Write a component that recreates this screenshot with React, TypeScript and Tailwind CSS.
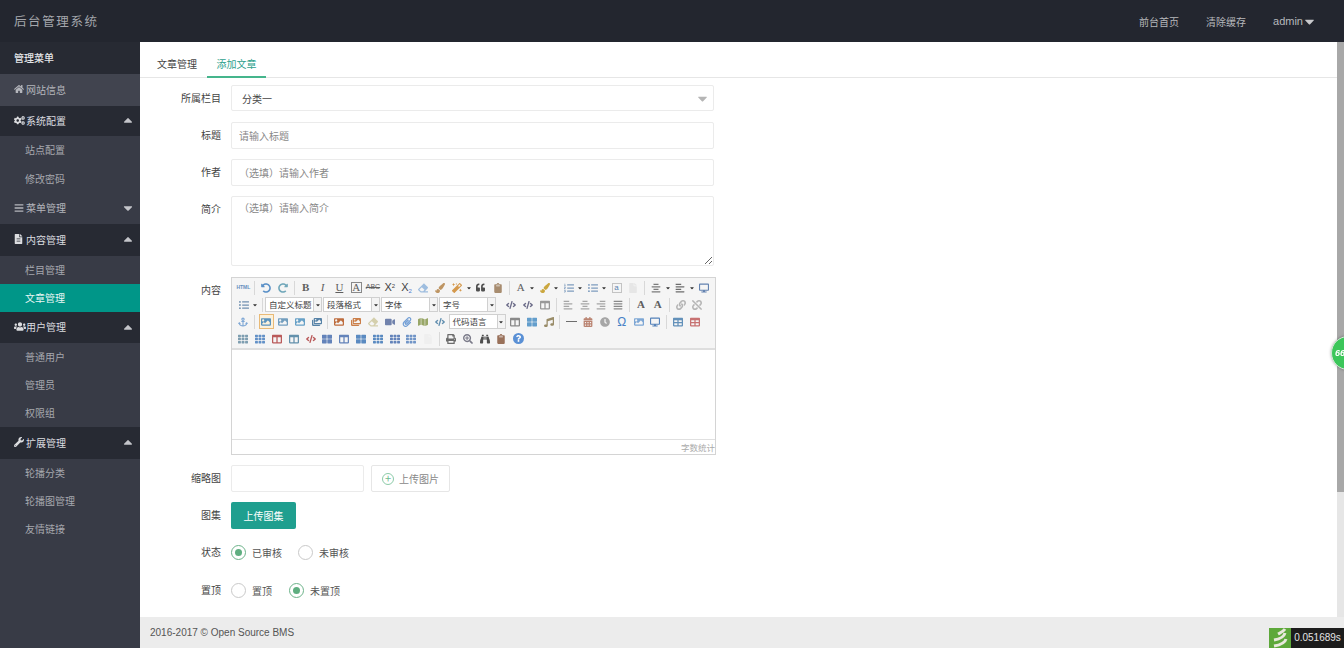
import React from 'react';
import { FaHome, FaCogs, FaBars, FaFileAlt, FaUsers, FaWrench, FaCaretUp, FaCaretDown, FaAnchor, FaQuestion, FaBinoculars, FaPrint, FaPaperclip, FaLink, FaUnlink, FaQuoteLeft, FaPaintBrush, FaEraser, FaMagic, FaUndoAlt, FaRedoAlt, FaListOl, FaListUl, FaAlignLeft, FaAlignCenter, FaAlignRight, FaAlignJustify, FaClock, FaCalendarAlt, FaImage, FaImages, FaTable, FaDesktop, FaClipboard, FaSearchPlus, FaFile, FaVideo, FaMusic, FaMap, FaColumns, FaThLarge, FaTh, FaCode } from 'react-icons/fa';

const FONT = '"Noto Sans CJK SC", "Liberation Sans", sans-serif';

type MenuRow = { label: string; kind: 'title' | 'head' | 'plain' | 'sub' | 'active' | 'info'; h: number; icon?: React.ReactNode; caret?: 'up' | 'down' };

const menu: MenuRow[] = [
    { label: '管理菜单', kind: 'title', h: 32 },
    { label: '网站信息', kind: 'info', h: 32, icon: <FaHome className="w-[10px] h-[10px]" /> },
    { label: '系统配置', kind: 'head', h: 30, icon: <FaCogs className="w-[11px] h-[11px]" />, caret: 'up' },
    { label: '站点配置', kind: 'sub', h: 29 },
    { label: '修改密码', kind: 'sub', h: 28 },
    { label: '菜单管理', kind: 'plain', h: 31, icon: <FaBars className="w-[10px] h-[10px]" />, caret: 'down' },
    { label: '内容管理', kind: 'head', h: 32, icon: <FaFileAlt className="w-[9px] h-[10px]" />, caret: 'up' },
    { label: '栏目管理', kind: 'sub', h: 28 },
    { label: '文章管理', kind: 'active', h: 28 },
    { label: '用户管理', kind: 'head', h: 31, icon: <FaUsers className="w-[12px] h-[11px]" />, caret: 'up' },
    { label: '普通用户', kind: 'sub', h: 28 },
    { label: '管理员', kind: 'sub', h: 28 },
    { label: '权限组', kind: 'sub', h: 28 },
    { label: '扩展管理', kind: 'head', h: 32, icon: <FaWrench className="w-[10px] h-[10px]" />, caret: 'up' },
    { label: '轮播分类', kind: 'sub', h: 28 },
    { label: '轮播图管理', kind: 'sub', h: 28 },
    { label: '友情链接', kind: 'sub', h: 28 },
];

const SideItem: React.FC<{ row: MenuRow }> = ({ row }) => {
    const styles: Record<MenuRow['kind'], string> = {
        title: 'bg-[#272a33] text-[#e4e5e8] font-medium pl-[14px]',
        head: 'bg-[#272a33] text-[#dcdde0] pl-[14px]',
        info: 'bg-[#41444f] text-[#b4b6bc] pl-[14px]',
        plain: 'text-[#b4b6bc] pl-[14px]',
        sub: 'text-[#a6a8ae] pl-[25px]',
        active: 'bg-[#009688] text-[#e8f6f4] pl-[25px]',
    };
    return (
        <div className={`flex items-center pr-[5px] pb-[2px] text-[10px] ${styles[row.kind]}`} style={{ height: row.h }}>
            {row.icon && <span className="w-[12px] flex shrink-0 items-center">{row.icon}</span>}
            <span className="flex-1">{row.label}</span>
            {row.caret === 'up' && <FaCaretUp className="w-[14px] h-[14px] text-[#c4c5ca]" />}
            {row.caret === 'down' && <FaCaretDown className="w-[14px] h-[14px] text-[#c4c5ca]" />}
        </div>
    );
};

const FormRow: React.FC<{ label: string; top: string; children: React.ReactNode; center?: boolean }> = ({ label, top, children, center }) => (
    <div className={`flex ${top} ${center ? 'items-center' : ''}`}>
        <label className="w-[81px] shrink-0 text-right text-[10px] leading-[26px] text-[#444]">{label}</label>
        <div className="ml-[10px]">{children}</div>
    </div>
);

const Radio: React.FC<{ label: string; checked?: boolean }> = ({ label, checked }) => (
    <span className="flex items-center gap-[6px] text-[10px] text-[#555]">
        <span className={`w-[15px] h-[15px] rounded-full border flex items-center justify-center ${checked ? 'border-[#6db38a]' : 'border-[#c9c9c9]'}`}>
            {checked && <span className="w-[7px] h-[7px] rounded-full bg-[#5fae80]" />}
        </span>
        {label}
    </span>
);

// toolbar pieces
type Tool = { t: 'i'; n: React.ReactNode; caret?: boolean; on?: boolean } | { t: 's' } | { t: 'gap'; w: number } | { t: 'sel'; label: string; w: number };

const ic = (n: React.ReactNode, caret?: boolean, on?: boolean): Tool => ({ t: 'i', n, caret, on });
const sep: Tool = { t: 's' };
const sel = (label: string, w = 57): Tool => ({ t: 'sel', label, w });
const cls = 'w-[10px] h-[10px]';
const letter = (s: string, extra = '') => <span className={`font-['Liberation_Serif'] text-[11px] leading-none text-[#444] ${extra}`}>{s}</span>;

const row1: Tool[] = [
    ic(<span className="text-[5px] font-bold text-[#4a7fb5] font-['Liberation_Sans']">HTML</span>), sep,
    ic(<FaUndoAlt className={`${cls} text-[#3f7fc0]`} />), ic(<FaRedoAlt className={`${cls} text-[#5a9ab0]`} />), sep,
    ic(letter('B', 'font-bold')), ic(letter('I', 'italic')), ic(letter('U', 'underline')),
    ic(<span className="w-[11px] h-[11px] border border-[#777] flex items-center justify-center">{letter('A', 'text-[9px]')}</span>),
    ic(<span className="text-[7px] line-through text-[#444] font-['Liberation_Sans']">ABC</span>),
    ic(<span className="text-[11px] leading-none font-['Liberation_Sans'] text-[#222]">X<sup className="text-[6px]">2</sup></span>),
    ic(<span className="text-[11px] leading-none font-['Liberation_Sans'] text-[#222]">X<sub className="text-[6px] text-[#36c]">2</sub></span>),
    ic(<FaEraser className={`${cls} text-[#8fb4dc]`} />), ic(<FaPaintBrush className={`${cls} text-[#b5854a]`} />),
    ic(<FaMagic className={`${cls} text-[#d08a30]`} />, true),
    ic(<FaQuoteLeft className="w-[9px] h-[9px] text-[#333]" />), ic(<FaClipboard className={`${cls} text-[#9a7a58]`} />), sep,
    ic(letter('A'), true), ic(<FaPaintBrush className={`${cls} text-[#c49a20]`} />, true),
    ic(<FaListOl className={`${cls} text-[#6a8db5]`} />, true), ic(<FaListUl className={`${cls} text-[#6a8db5]`} />, true),
    ic(<span className="w-[10px] h-[10px] border border-[#bbb] text-[8px] leading-[8px] text-center text-[#3a6ea5] font-['Liberation_Sans']">a</span>),
    ic(<FaFile className={`${cls} text-[#e4e4e4]`} />), sep,
    ic(<FaAlignCenter className={`${cls} text-[#666]`} />, true), ic(<FaAlignLeft className={`${cls} text-[#555]`} />, true),
    ic(<FaDesktop className={`${cls} text-[#4a6fa5]`} />),
];

const row2: Tool[] = [
    ic(<FaListUl className={`${cls} text-[#5a7fa5]`} />, true), sep,
    sel('自定义标题'), sel('段落格式'), sel('字体'), sel('字号'), { t: 'gap', w: 6 },
    ic(<FaCode className={`${cls} text-[#557]`} />), ic(<FaCode className={`${cls} text-[#557]`} />), ic(<FaColumns className={`${cls} text-[#888]`} />), sep,
    ic(<FaAlignLeft className={`${cls} text-[#999]`} />), ic(<FaAlignCenter className={`${cls} text-[#999]`} />), ic(<FaAlignRight className={`${cls} text-[#999]`} />), ic(<FaAlignJustify className={`${cls} text-[#777]`} />), sep,
    ic(letter('A', 'font-bold')), ic(letter('A', 'font-bold')), sep,
    ic(<FaLink className={`${cls} text-[#aaa]`} />), ic(<FaUnlink className={`${cls} text-[#aaa]`} />),
];

const row3: Tool[] = [
    ic(<FaAnchor className={`${cls} text-[#6a9ad0]`} />), sep,
    ic(<FaImage className={`${cls} text-[#3f83b5]`} />, false, true), ic(<FaImage className={`${cls} text-[#5c8fb5]`} />), ic(<FaImage className={`${cls} text-[#4f93c0]`} />), ic(<FaImages className={`${cls} text-[#3b6f9a]`} />), sep,
    ic(<FaImage className={`${cls} text-[#b5561f]`} />), ic(<FaImages className={`${cls} text-[#c46a2a]`} />), ic(<FaEraser className={`${cls} text-[#cfc9a0]`} />), ic(<FaVideo className={`${cls} text-[#5a6fa0]`} />), ic(<FaPaperclip className={`${cls} text-[#5a8fd0]`} />), ic(<FaMap className={`${cls} text-[#8a9a50]`} />),
    ic(<FaCode className={`${cls} text-[#4a7fa5]`} />), sel('代码语言'),
    ic(<FaColumns className={`${cls} text-[#777]`} />), ic(<FaThLarge className={`${cls} text-[#4a8fc5]`} />), ic(<FaMusic className={`${cls} text-[#8a7a50]`} />), sep,
    ic(<span className="block w-[11px] h-[1px] bg-[#555]" />), ic(<FaCalendarAlt className={`${cls} text-[#b0705a]`} />), ic(<FaClock className={`${cls} text-[#999]`} />),
    ic(<span className="text-[12px] leading-none text-[#2a6fc0] font-['Liberation_Sans']">Ω</span>),
    ic(<FaImage className={`${cls} text-[#6a9ad0]`} />), ic(<FaDesktop className={`${cls} text-[#3a6fb0]`} />), sep,
    ic(<FaTable className={`${cls} text-[#4a80b0]`} />), ic(<FaTable className={`${cls} text-[#c05a5a]`} />),
];

const row4: Tool[] = [
    ic(<FaTh className={`${cls} text-[#6a8fa5]`} />), ic(<FaTh className={`${cls} text-[#4a80c0]`} />), ic(<FaColumns className={`${cls} text-[#b04040]`} />), ic(<FaColumns className={`${cls} text-[#4a80a0]`} />), ic(<FaCode className={`${cls} text-[#b04040]`} />),
    ic(<FaThLarge className={`${cls} text-[#4a70b0]`} />), ic(<FaColumns className={`${cls} text-[#4a70b0]`} />), ic(<FaThLarge className={`${cls} text-[#3f78b8]`} />), ic(<FaTh className={`${cls} text-[#3f78b8]`} />), ic(<FaTh className={`${cls} text-[#4a70b0]`} />), ic(<FaTh className={`${cls} text-[#5a85c0]`} />),
    ic(<FaFile className={`${cls} text-[#eeeeee]`} />), sep,
    ic(<FaPrint className={`${cls} text-[#555]`} />), ic(<FaSearchPlus className={`${cls} text-[#667]`} />), ic(<FaBinoculars className={`${cls} text-[#333]`} />), ic(<FaClipboard className={`${cls} text-[#8a5a40]`} />),
    ic(<span className="w-[11px] h-[11px] rounded-full bg-[#3f7fd0] flex items-center justify-center"><FaQuestion className="w-[7px] h-[7px] text-white" /></span>),
];

const ToolRow: React.FC<{ tools: Tool[] }> = ({ tools }) => (
    <div className="flex items-center h-[17px]">
        {tools.map((tool, i) => {
            if (tool.t === 's') return <span key={i} className="w-[1px] h-[14px] mx-[2.5px] bg-[#d8d8d8] shrink-0" />;
            if (tool.t === 'gap') return <span key={i} className="shrink-0" style={{ width: tool.w }} />;
            if (tool.t === 'sel') {
                return (
                    <span key={i} className="flex items-center h-[15px] shrink-0 mr-[1px] border border-[#d0d0d0] bg-white text-[8.5px] text-[#444]" style={{ width: tool.w }}>
                        <span className="flex-1 pl-[3px] whitespace-nowrap overflow-hidden">{tool.label}</span>
                        <span className="w-[8px] h-full border-l border-[#d0d0d0] bg-[#f4f4f4] flex items-center justify-center"><FaCaretDown className="w-[6px] h-[6px] text-[#333]" /></span>
                    </span>
                );
            }
            return (
                <span key={i} className={`flex items-center justify-center shrink-0 h-[15px] ${tool.caret ? 'w-[24px]' : 'w-[16.8px]'}`}>
                    <span className={`flex items-center justify-center w-[15px] h-[15px] opacity-85 ${tool.on ? 'border border-[#e8b060] bg-[#fdf1d8]' : ''}`}>{tool.n}</span>
                    {tool.caret && <FaCaretDown className="w-[6px] h-[6px] text-[#333] ml-[1px]" />}
                </span>
            );
        })}
    </div>
);

const inputClass = 'block w-[483px] h-[27px] border border-[#ebebeb] rounded-[2px] px-[7px] text-[10px] text-[#444] placeholder:text-[#888] outline-none bg-white';

export default function App() {
    return (
        <div className="w-[1344px] h-[648px] overflow-hidden flex flex-col bg-white" style={{ fontFamily: FONT }}>
            <header className="h-[42px] shrink-0 bg-[#23262f] flex items-center pl-[14px] pr-[27px]">
                <span className="text-[12.5px] tracking-[1.6px] text-[#a4a6ac]">后台管理系统</span>
                <nav className="ml-auto flex items-center text-[10px] text-[#b6b8bc]">
                    <span>前台首页</span>
                    <span className="ml-[27px]">清除缓存</span>
                    <span className="ml-[27px] flex items-center font-['Liberation_Sans'] text-[11px]">admin<FaCaretDown className="w-[15px] h-[15px] -ml-[1px] text-[#c8c9cc]" /></span>
                </nav>
            </header>
            <div className="flex flex-1 min-h-0">
                <aside className="w-[140px] shrink-0 bg-[#383b46]">
                    {menu.map(row => <SideItem key={row.label} row={row} />)}
                </aside>
                <div className="flex-1 flex flex-col min-w-0">
                    <div className="flex-1 flex min-h-0">
                        <main className="flex-1 min-w-0 flex flex-col">
                            <div className="h-[36px] shrink-0 border-b border-[#e6e6e6] flex text-[10px] text-[#444] pl-[7px]">
                                <span className="w-[60px] text-center leading-[43px]">文章管理</span>
                                <span className="w-[59px] h-[36px] text-center leading-[43px] text-[#2e9f8d] border-b-2 border-[#45b58c]">添加文章</span>
                            </div>
                            <form className="flex flex-col">
                                <FormRow label="所属栏目" top="mt-[7px]">
                                    <div className={`${inputClass} !h-[26px] flex items-center !px-[10px]`}>
                                        <span className="flex-1">分类一</span>
                                        <FaCaretDown className="w-[15px] h-[15px] text-[#b5b5b5] -mr-[7px]" />
                                    </div>
                                </FormRow>
                                <FormRow label="标题" top="mt-[11px]"><input className={inputClass} placeholder="请输入标题" readOnly /></FormRow>
                                <FormRow label="作者" top="mt-[10px]"><input className={inputClass} placeholder="（选填）请输入作者" readOnly /></FormRow>
                                <FormRow label="简介" top="mt-[10px]">
                                    <textarea className={`${inputClass} !h-[70px] py-[3px]`} placeholder="（选填）请输入简介" readOnly />
                                </FormRow>
                                <FormRow label="内容" top="mt-[11px]">
                                    <div className="w-[485px] h-[178px] border border-[#d4d4d4] flex flex-col">
                                        <div className="h-[72px] shrink-0 bg-[#f5f5f5] border-b-2 border-[#dedede] px-[3px] pt-[1px]">
                                            <ToolRow tools={row1} />
                                            <ToolRow tools={row2} />
                                            <ToolRow tools={row3} />
                                            <ToolRow tools={row4} />
                                        </div>
                                        <div className="flex-1 bg-white" />
                                        <div className="h-[15px] border-t border-[#e0e0e0] text-right text-[8.5px] leading-[14px] text-[#aaa]">字数统计</div>
                                    </div>
                                </FormRow>
                                <FormRow label="缩略图" top="mt-[10px]">
                                    <div className="flex gap-[7px]">
                                        <div className="w-[133px] h-[27px] border border-[#ebebeb] rounded-[2px]" />
                                        <button type="button" className="w-[79px] h-[27px] border border-[#e6e6e6] rounded-[2px] flex items-center justify-center gap-[5px] text-[10px] text-[#888]">
                                            <span className="w-[12px] h-[12px] rounded-full border border-[#8ccba8] text-[#6dbb90] flex items-center justify-center text-[11px] leading-none">+</span>
                                            上传图片
                                        </button>
                                    </div>
                                </FormRow>
                                <FormRow label="图集" top="mt-[10px]">
                                    <button type="button" className="block w-[65px] h-[27px] rounded-[2px] bg-[#1f9f8f] text-white text-[10px]">上传图集</button>
                                </FormRow>
                                <FormRow label="状态" top="mt-[10px]" center>
                                    <div className="flex gap-[16px] h-[26px] items-center"><Radio label="已审核" checked /><Radio label="未审核" /></div>
                                </FormRow>
                                <FormRow label="置顶" top="mt-[12px]" center>
                                    <div className="flex gap-[17px] h-[26px] items-center"><Radio label="置顶" /><Radio label="未置顶" checked /></div>
                                </FormRow>
                            </form>
                        </main>
                        <div className="w-[7px] shrink-0 bg-[#e6e6e6] flex flex-col">
                            <div className="h-[450px] bg-[#a8a8a8]" />
                        </div>
                    </div>
                    <footer className="h-[31px] shrink-0 bg-[#ececec] flex items-center pl-[10px] text-[10px] text-[#555] font-['Liberation_Sans']">
                        2016-2017 © Open Source BMS
                    </footer>
                </div>
            </div>
            {/* floating widgets */}
            <div className="fixed left-[1331px] top-[336px] w-[34px] h-[34px] rounded-full border border-[#cfe8d4] bg-[#3cc65a] text-white text-[9px] italic font-bold leading-[32px] pl-[3px] shadow-[0_0_3px_rgba(0,0,0,0.35)] font-['Liberation_Sans']">66</div>
            <div className="fixed right-0 bottom-0 h-[20px] flex items-center font-['Liberation_Sans']">
                <span className="w-[22px] h-full bg-[#5da83a] flex items-center justify-center">
                    <svg viewBox="0 0 22 20" className="w-[22px] h-[20px]" fill="none" stroke="#e8e8dc" strokeWidth="3"><path d="M5 18c6-1 11-3 12-7M5 12c6-1 10-3 11-7M9 6c2-1 5-2 7-5" /></svg>
                </span>
                <span className="w-[53px] h-full bg-[#1c1c1c] text-[#e4e4e4] text-[10px] leading-[20px] text-center">0.051689s</span>
            </div>
        </div>
    );
}
